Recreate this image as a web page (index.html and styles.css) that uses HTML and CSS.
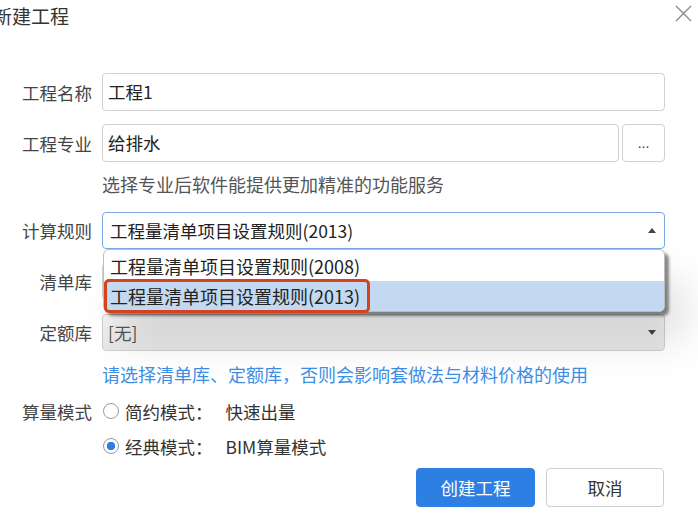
FILE: index.html
```html
<!DOCTYPE html>
<html>
<head>
    <title>新建工程</title>
    <link rel="stylesheet" href="styles.css">
</head>
<body>
    <div class="dialog">
        <div class="header">
            <span class="title">新建工程</span>
            <svg class="close" width="17" height="17" viewBox="0 0 17 17">
                <path d="M1 1 L16 16 M16 1 L1 16" stroke="#8a8a8a" stroke-width="1.4" fill="none"/>
            </svg>
        </div>
        <div class="form">
            <div class="row">
                <label>工程名称</label>
                <div class="field">工程1</div>
            </div>
            <div class="row no-gap">
                <label>工程专业</label>
                <div class="field-group">
                    <div class="field">给排水</div>
                    <button class="more" type="button">...</button>
                </div>
            </div>
            <div class="hint">选择专业后软件能提供更加精准的功能服务</div>
            <div class="row row-select">
                <label>计算规则</label>
                <div class="select focused">
                    <span>工程量清单项目设置规则(2013)</span>
                    <span class="arrow up"></span>
                    <div class="popup">
                        <div class="option">工程量清单项目设置规则(2008)</div>
                        <div class="option selected">工程量清单项目设置规则(2013)<span class="mark"></span></div>
                    </div>
                </div>
            </div>
            <div class="row row-select">
                <label>清单库</label>
                <div class="select disabled"><span></span></div>
            </div>
            <div class="row row-select no-gap">
                <label>定额库</label>
                <div class="select disabled">
                    <span>[无]</span>
                    <span class="arrow down"></span>
                </div>
            </div>
            <div class="hint blue">请选择清单库、定额库，否则会影响套做法与材料价格的使用</div>
            <div class="row row-radio">
                <label>算量模式</label>
                <div class="radio"><span class="dot"></span>简约模式：<span class="sub">快速出量</span></div>
            </div>
            <div class="row row-radio second">
                <label></label>
                <div class="radio"><span class="dot checked"></span>经典模式：<span class="sub">BIM算量模式</span></div>
            </div>
        </div>
        <div class="footer">
            <button class="btn primary" type="button">创建工程</button>
            <button class="btn" type="button">取消</button>
        </div>
    </div>
</body>
</html>
```

FILE: styles.css
```css
body {
    margin: 0;
    padding: 0;
    background: #fff;
    font-family: "Microsoft YaHei", "Noto Sans CJK SC", sans-serif;
    color: #333;
    overflow: hidden;
}
.dialog {
    width: 698px;
    height: 524px;
}
.header {
    display: flex;
    justify-content: space-between;
    align-items: flex-start;
    height: 32px;
}
.title {
    margin-left: -7px;
    font-size: 19px;
    line-height: 32px;
    color: #333;
}
.close {
    margin-top: 5px;
    margin-right: 6px;
}
.form {
    margin-top: 41px;
    padding-right: 33px;
}
.row {
    display: grid;
    grid-template-columns: 92px 1fr;
    column-gap: 10px;
    align-items: center;
    height: 38px;
    margin-bottom: 13px;
}
.row.no-gap {
    margin-bottom: 0;
}
.row label {
    text-align: right;
    font-size: 17.5px;
    color: #444;
}
.field {
    box-sizing: border-box;
    height: 38px;
    border: 1px solid #d0d0d0;
    border-radius: 4px;
    padding: 0 5px;
    font-size: 17.5px;
    line-height: 36px;
    color: #222;
}
.field-group {
    display: flex;
    gap: 3px;
}
.field-group .field {
    flex: 1;
}
.more {
    width: 43px;
    height: 38px;
    border: 1px solid #d0d0d0;
    border-radius: 4px;
    background: #fff;
    font-size: 14px;
    color: #333;
    padding: 0;
    font-family: "Liberation Sans", sans-serif;
}
.hint {
    margin: 10px 0 16px 102px;
    font-size: 18px;
    line-height: 24px;
    color: #555;
}
.hint.blue {
    margin: 11px 0 10px 102px;
    color: #3d8fe6;
}
.row-select {
    height: 37px;
    margin-bottom: 14px;
}
.select {
    position: relative;
    box-sizing: border-box;
    height: 37px;
    border: 1px solid #cfcfcf;
    border-radius: 4px;
    padding: 0 7px;
    font-size: 17.5px;
    line-height: 35px;
    color: #222;
}
.select.focused {
    border-color: #7ea6e6;
}
.select.disabled {
    background: linear-gradient(#f3f3f3, #e6e6e6);
    color: #555;
    padding: 0 5px;
}
.arrow {
    position: absolute;
    right: 8px;
    top: 15px;
    width: 0;
    height: 0;
    border-left: 4px solid transparent;
    border-right: 4px solid transparent;
}
.arrow.up {
    border-bottom: 5px solid #444;
}
.arrow.down {
    border-top: 5px solid #444;
}
.popup {
    position: absolute;
    top: 36px;
    left: 0;
    right: -1px;
    z-index: 2;
    padding-top: 1px;
    background: #fff;
    border: 1px solid #bdbdbd;
    border-radius: 6px;
    box-shadow: 4px 4px 3px rgba(0, 0, 0, 0.45), 20px 30px 40px rgba(0, 0, 0, 0.12);
}
.option {
    position: relative;
    height: 30px;
    line-height: 30px;
    padding-left: 6px;
    font-size: 18px;
    color: #222;
}
.option.selected {
    background: #c3d9f1;
    border-radius: 0 0 5px 5px;
}
.mark {
    position: absolute;
    left: 0;
    top: -2px;
    width: 266px;
    height: 34px;
    box-sizing: border-box;
    border: 3px solid #d5421d;
    border-radius: 5px;
}
.row-radio {
    height: 30px;
    margin-bottom: 5px;
}
.row-radio.second {
    margin-bottom: 7px;
}
.radio {
    display: flex;
    align-items: center;
    font-size: 17.5px;
    color: #333;
}
.sub {
    margin-left: 13px;
}
.dot {
    box-sizing: border-box;
    width: 16px;
    height: 16px;
    border: 1px solid #9a9a9a;
    border-radius: 50%;
    margin-right: 6px;
    margin-left: 1px;
    background: #fff;
}
.dot.checked {
    background: radial-gradient(circle, #2e7fe3 0 4px, #fff 4.5px);
}
.footer {
    display: flex;
    justify-content: flex-end;
    gap: 11px;
    padding-right: 34px;
}
.btn {
    width: 118px;
    height: 39px;
    border: 1px solid #cfcfcf;
    border-radius: 4px;
    background: #fff;
    font-size: 17.5px;
    color: #333;
    font-family: "Microsoft YaHei", "Noto Sans CJK SC", sans-serif;
    padding: 0;
}
.btn.primary {
    width: 119px;
    background: #2e7fe3;
    border-color: #2e7fe3;
    color: #fff;
}
```
